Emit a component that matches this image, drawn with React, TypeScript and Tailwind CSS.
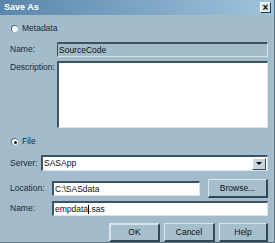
import React from "react";

const font = { fontFamily: '"Liberation Sans", Arial, sans-serif' };

function Radio({ checked }: { checked?: boolean }) {
  return (
    <div className="w-[7px] h-[7px] rounded-full bg-white border-l border-t border-[#556b78] flex items-center justify-center">
      {checked && <div className="w-[3px] h-[3px] rounded-full bg-[#1a1a1a]" />}
    </div>
  );
}

function Field({ children, className = "" }: { children?: React.ReactNode; className?: string }) {
  return (
    <div className={`bg-white border-t-2 border-l-2 border-[#3e5462] border-r border-b border-r-[#d8e4ea] border-b-[#d8e4ea] flex items-center pl-[1px] text-[#111] ${className}`}>
      {children}
    </div>
  );
}

function Btn({ children, className = "" }: { children: React.ReactNode; className?: string }) {
  return (
    <div className={`h-[19px] flex items-center justify-center bg-[#a6bfcd] border border-[#d9e5ec] border-r-[#33495a] border-b-[#33495a] border-r-2 border-b-2 text-[#111] ${className}`}>
      {children}
    </div>
  );
}

export default function App() {
  return (
    <div style={font} className="w-[275px] h-[243px] bg-[#a3bccb] overflow-hidden flex flex-col border-r border-b border-[#5d7686] text-[8.5px]">
      <div className="h-[16px] bg-gradient-to-r from-[#5a86aa] to-[#9fc4dd] flex items-center justify-between pl-[4px] pr-[3px]">
        <span className="text-white font-bold text-[9px] leading-none">Save As</span>
        <div className="w-[11px] h-[11px] bg-[#dfe8ee] border border-[#2d3e4a] border-t-white border-l-white flex items-center justify-center text-[10px] font-bold leading-none text-black">×</div>
      </div>
      <div className="flex flex-col pl-[10px] pr-[6px] text-[#1a2a33]">
        <div className="flex items-center gap-[4px] mt-[10px] h-[7px] pl-[1px]">
          <Radio />
          <span>Metadata</span>
        </div>
        <div className="flex items-center mt-[10px]">
          <span className="w-[47px]">Name:</span>
          <div className="flex-1 h-[15px] border-t-2 border-l border-[#3e5462] border-r border-b border-r-[#d8e4ea] border-b-[#d8e4ea] flex items-center pl-[1px] text-[#111]">SourceCode</div>
        </div>
        <div className="flex mt-[4px]">
          <span className="w-[47px] leading-none pt-[2px]">Description:</span>
          <Field className="flex-1 h-[67px]" />
        </div>
        <div className="flex items-center gap-[4px] mt-[10px] h-[7px] pl-[1px]">
          <Radio checked />
          <span>File</span>
        </div>
        <div className="flex items-center mt-[10px]">
          <span className="w-[31px]">Server:</span>
          <Field className="flex-1 h-[16px] pr-[1px] justify-between">
            <span>SASApp</span>
            <div className="w-[14px] h-[12px] bg-[#c8d6de] border border-white border-r-[#33495a] border-b-[#33495a] flex items-center justify-center">
              <div className="w-0 h-0 border-l-[3px] border-r-[3px] border-t-[3px] border-l-transparent border-r-transparent border-t-black" />
            </div>
          </Field>
        </div>
        <div className="flex items-center mt-[8px]">
          <span className="w-[42px]">Location:</span>
          <Field className="w-[148px] h-[15px]">C:\SASdata</Field>
          <Btn className="ml-[8px] w-[60px]">Browse...</Btn>
        </div>
        <div className="flex items-center mt-[3px]">
          <span className="w-[42px]">Name:</span>
          <Field className="flex-1 h-[15px]">
            <span>empdata</span>
            <span className="w-px h-[9px] bg-black" />
            <span>.sas</span>
          </Field>
        </div>
        <div className="flex justify-end gap-[4px] mt-[7px]">
          <Btn className="w-[51px] border-[#1a2a33] border-2">OK</Btn>
          <Btn className="w-[51px]">Cancel</Btn>
          <Btn className="w-[49px]">Help</Btn>
        </div>
      </div>
    </div>
  );
}
